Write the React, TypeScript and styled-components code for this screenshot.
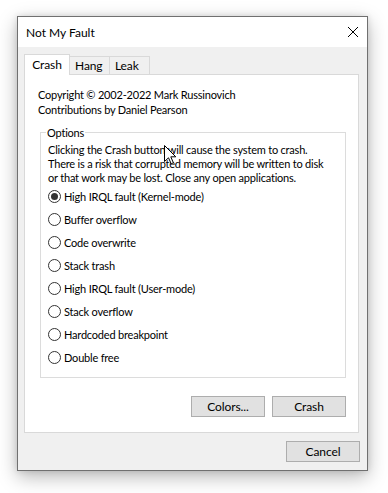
import { useState } from "react";
import styled, { createGlobalStyle } from "styled-components";

const GlobalStyle = createGlobalStyle`
  html, body {
    margin: 0;
    padding: 0;
    background: #ffffff;
  }
  body {
    min-height: 493px;
    font-family: "Segoe UI", Lato, "Liberation Sans", sans-serif;
    font-size: 11px;
    letter-spacing: -0.2px;
    color: #000000;
  }
  * {
    box-sizing: border-box;
  }
`;

const options = [
  "High IRQL fault (Kernel-mode)",
  "Buffer overflow",
  "Code overwrite",
  "Stack trash",
  "High IRQL fault (User-mode)",
  "Stack overflow",
  "Hardcoded breakpoint",
  "Double free",
];

const tabs = ["Crash", "Hang", "Leak"];

export default function App() {
  const [tab, setTab] = useState("Crash");
  const [choice, setChoice] = useState(0);

  return (
    <>
      <GlobalStyle />
      <Window>
        <TitleBar>
          <Title>Not My Fault</Title>
          <CloseIcon width="10" height="10" viewBox="0 0 10 10">
            <path d="M0 0 L10 10 M10 0 L0 10" stroke="#000" strokeWidth="1" />
          </CloseIcon>
        </TitleBar>

        <Body>
          <TabStrip>
            {tabs.map((name) => (
              <Tab key={name} $active={tab === name} onClick={() => setTab(name)}>
                {name}
              </Tab>
            ))}
          </TabStrip>

          <Panel>
            <Credits>
              <div>Copyright © 2002-2022 Mark Russinovich</div>
              <div>Contributions by Daniel Pearson</div>
            </Credits>

            <GroupBox>
              <Legend>Options</Legend>
              <Description>
                Clicking the Crash button will cause the system to crash.
                <br />
                There is a risk that corrupted memory will be written to disk
                <br />
                or that work may be lost. Close any open applications.
              </Description>
              <RadioList>
                {options.map((label, i) => (
                  <RadioRow key={label} onClick={() => setChoice(i)}>
                    <RadioCircle $checked={choice === i} />
                    <span>{label}</span>
                  </RadioRow>
                ))}
              </RadioList>
            </GroupBox>

            <PanelButtons>
              <Button>Colors...</Button>
              <Button>Crash</Button>
            </PanelButtons>
          </Panel>

          <Footer>
            <CancelButton>Cancel</CancelButton>
          </Footer>
        </Body>
      </Window>

      <Cursor width="13" height="20" viewBox="0 0 13 20">
        <path
          d="M0.5 0.5 L0.5 16.5 L4.5 12.8 L7.2 18.8 L9.4 17.8 L6.8 11.8 L11.8 11.8 Z"
          fill="#ffffff"
          stroke="#000000"
          strokeWidth="1"
          strokeLinejoin="miter"
        />
      </Cursor>
    </>
  );
}

const Window = styled.div`
  margin: 16px 0 0 17px;
  width: 351px;
  height: 455px;
  border: 1px solid #707070;
  box-shadow: 0 6px 18px rgba(0, 0, 0, 0.28), 0 0 6px rgba(0, 0, 0, 0.12);
  display: flex;
  flex-direction: column;
  background: #f0f0f0;
`;

const TitleBar = styled.div`
  height: 30px;
  background: #ffffff;
  display: flex;
  align-items: center;
  justify-content: space-between;
  padding: 0 9px 0 8px;
`;

const Title = styled.span`
  font-size: 12px;
  letter-spacing: 0;
  line-height: 15px;
`;

const CloseIcon = styled.svg`
  display: block;
`;

const Body = styled.div`
  flex: 1;
  display: flex;
  flex-direction: column;
  padding: 7px 8px 8px 6px;
`;

const TabStrip = styled.div`
  height: 20px;
  display: flex;
  align-items: flex-end;
`;

const Tab = styled.div<{ $active: boolean }>`
  position: relative;
  z-index: ${({ $active }) => ($active ? 1 : 0)};
  width: ${({ $active }) => ($active ? "46px" : "41px")};
  height: ${({ $active }) => ($active ? "21px" : "18px")};
  margin-bottom: ${({ $active }) => ($active ? "-1px" : "0")};
  margin-left: ${({ $active }) => ($active ? "0" : "-1px")};
  background: ${({ $active }) => ($active ? "#ffffff" : "#f0f0f0")};
  border: 1px solid #d9d9d9;
  border-bottom: none;
  display: flex;
  align-items: center;
  justify-content: ${({ $active }) => ($active ? "center" : "flex-start")};
  padding: ${({ $active }) => ($active ? "0 0 1px" : "0 0 0 5px")};
  font-size: 12px;
  letter-spacing: -0.1px;
  line-height: 15px;
  cursor: default;

  &:first-child {
    margin-left: 0;
  }
`;

const Panel = styled.div`
  height: 359px;
  background: #ffffff;
  border: 1px solid #d9d9d9;
  padding: 12px 12px 0 13px;
  display: flex;
  flex-direction: column;
`;

const Credits = styled.div`
  line-height: 15px;
`;

const GroupBox = styled.fieldset`
  margin: 8px 0 0 2px;
  padding: 0 6px 8px 7px;
  border: 1px solid #dcdcdc;
  min-width: 0;
`;

const Legend = styled.legend`
  padding: 0 1px;
  margin-left: -2px;
  line-height: 15px;
`;

const Description = styled.div`
  margin-top: 3px;
  line-height: 14px;
  white-space: nowrap;
`;

const RadioList = styled.div`
  display: flex;
  flex-direction: column;
`;

const RadioRow = styled.div`
  height: 23px;
  display: flex;
  align-items: center;
  gap: 3px;
  line-height: 15px;
  cursor: default;
`;

const RadioCircle = styled.span<{ $checked: boolean }>`
  width: 13px;
  height: 13px;
  border: 1px solid #333333;
  border-radius: 50%;
  background: #ffffff;
  display: flex;
  align-items: center;
  justify-content: center;
  flex-shrink: 0;

  &::after {
    content: "";
    width: 7px;
    height: 7px;
    border-radius: 50%;
    background: #333333;
    display: ${({ $checked }) => ($checked ? "block" : "none")};
  }
`;

const PanelButtons = styled.div`
  margin-top: 18px;
  display: flex;
  justify-content: flex-end;
  gap: 7px;
`;

const Button = styled.button`
  width: 74px;
  height: 21px;
  padding: 0;
  background: #e1e1e1;
  border: 1px solid #adadad;
  font-family: inherit;
  font-size: 12px;
  letter-spacing: -0.1px;
  line-height: 15px;
  color: #000000;
`;

const Footer = styled.div`
  margin-top: 8px;
  display: flex;
  justify-content: flex-end;
`;

const CancelButton = styled(Button)`
  margin-right: -1px;
`;

const Cursor = styled.svg`
  position: absolute;
  left: 164px;
  top: 145px;
  pointer-events: none;
`;
